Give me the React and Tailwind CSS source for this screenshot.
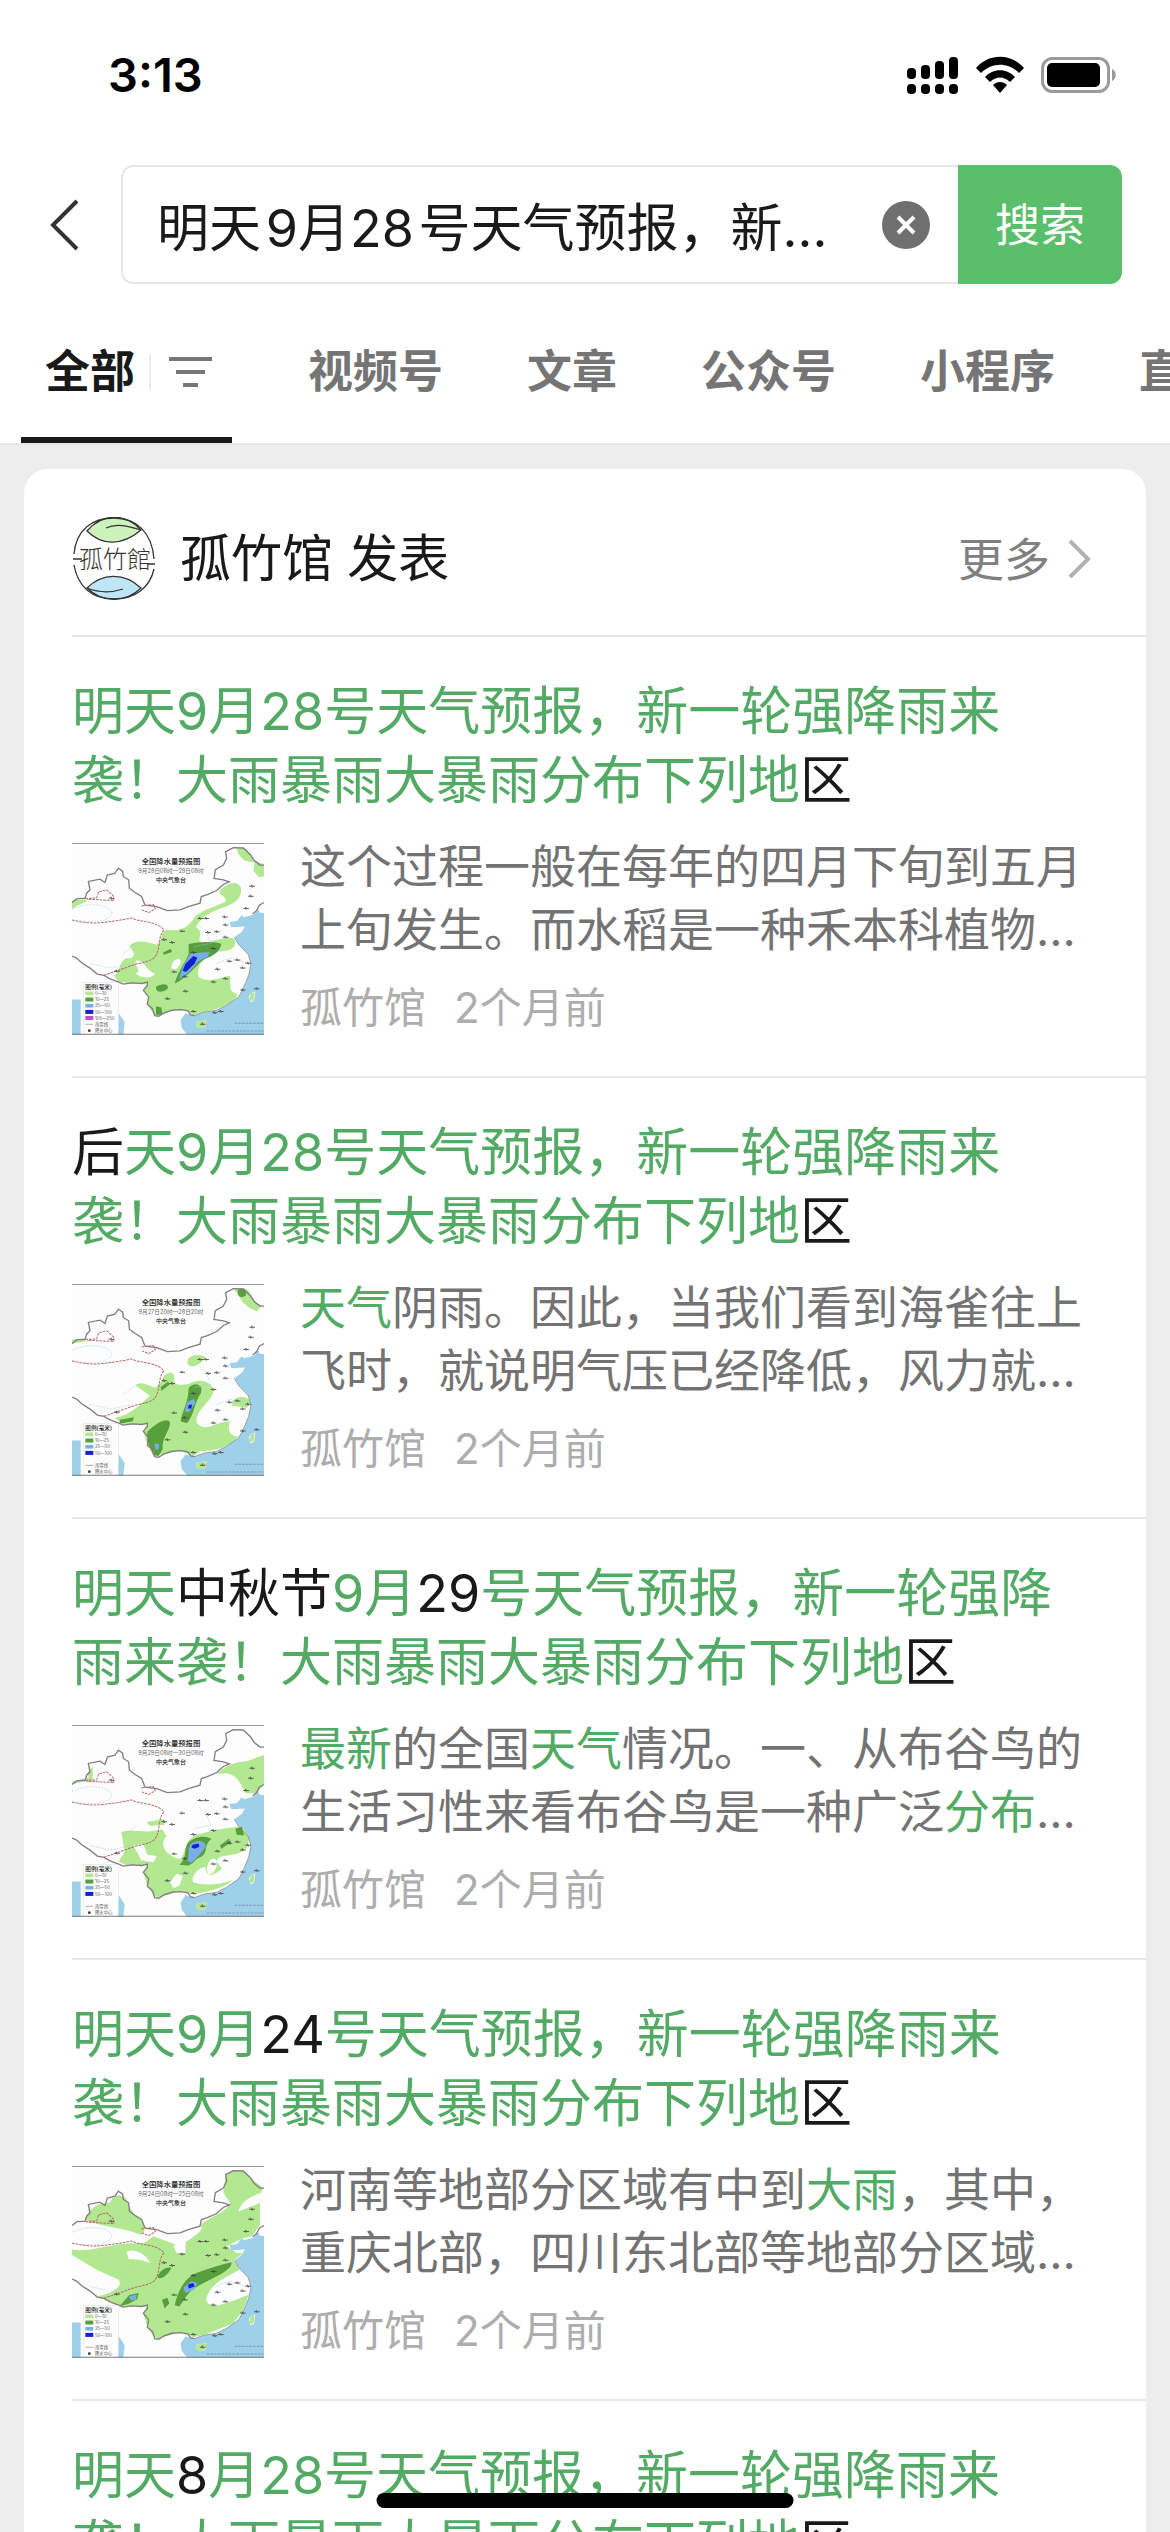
import { useState } from "react";

const HEADLINE_END = "新一轮强降雨来袭！大雨暴雨大暴雨分布下列地*区";

// Rain areas per map, drawn on the shared 576x574 canvas
const rainMaps = {
  a: {
    date: "9月28日08时—29日08时",
    light: [
      "M36 212L75 208L80 214L50 228L36 238Z",
      "M530 54L556 56L574 80L584 92L612 104V140L596 142L580 122L584 98L552 92L534 72Z",
      "M478 184C500 160 530 150 542 172C550 205 520 222 492 232C455 244 420 262 408 292C440 312 400 330 430 338C470 332 522 310 526 334C528 358 500 366 470 364C430 372 408 410 416 440C440 462 490 440 510 436C514 462 500 484 534 492C520 520 470 540 430 545L400 555L380 540L335 540L296 558L280 552L262 520L265 500L250 480L262 460L215 460L175 455L162 436C186 426 170 400 200 384C224 388 230 370 208 350C220 326 260 334 290 344C316 322 296 306 320 300C360 304 380 296 400 268C416 240 470 232 498 214C500 200 480 198 478 184Z",
    ],
    gaps: ["M228 392C250 386 256 420 284 430C280 448 240 444 228 430C248 420 220 410 228 392Z", "M334 410C336 388 362 380 362 394C358 420 334 424 334 410Z"],
    mid: [
      "M386 342C420 334 470 334 484 342C480 366 456 380 436 386C410 400 380 446 344 460C352 430 372 404 386 372Z",
      "M288 470C306 458 326 460 324 474C310 488 286 490 288 470Z",
      "M288 528L304 532L308 552L288 554Z",
      "M308 368L332 356L336 366L312 374Z",
    ],
    blue: ["M392 370L448 366L444 380L414 394C400 412 376 440 358 446C362 420 376 392 392 370Z"],
    heavy: ["M400 378L412 382L404 400L378 426L368 422L376 402Z"],
  },
  b: {
    date: "9月27日20时—28日20时",
    light: [
      "M36 206L76 204L76 212L36 218Z",
      "M524 58C548 44 572 56 574 78L592 100L606 104L590 122L566 110L550 96Z",
      "M384 264C394 248 428 250 436 258C430 276 390 300 382 276Z",
      "M306 330C310 306 340 296 342 316C346 330 330 346 384 340C420 316 462 334 460 364C446 400 404 420 410 454C436 490 478 446 510 452C500 476 512 500 536 494C510 530 460 540 420 540L400 555L360 538L310 550L280 552L262 520L250 480L262 460L190 460L164 440C200 436 232 410 270 374L228 344C240 326 270 346 286 350Z",
      "M518 388C530 376 556 372 572 390L562 410L516 404Z",
    ],
    gaps: [],
    mid: [
      "M386 352C400 330 434 338 422 368C404 390 400 440 380 456L362 450C366 420 384 400 386 352Z",
      "M262 482C280 462 322 434 330 454C330 480 304 500 308 534L296 554L280 552L262 510Z",
      "M180 446L222 438L218 450L178 458Z",
      "M534 58C548 50 560 60 558 74C546 84 530 80 534 58Z",
      "M302 348L324 332L330 340L304 360Z",
    ],
    blue: ["M382 392L402 384L406 396L386 424L374 420Z", "M284 516L298 520L294 536L286 534Z"],
    heavy: ["M386 402L396 400L394 412L384 412Z"],
  },
  c: {
    date: "9月29日08时—30日08时",
    light: [
      "M84 180L98 164L98 206L36 216L36 210L86 198Z",
      "M470 186C490 166 520 150 560 148L612 130V215L590 244L556 244C546 226 536 190 500 184Z",
      "M184 360C220 350 260 366 306 352L320 372C290 400 330 440 362 440C380 420 374 372 420 366C470 350 520 344 550 346L568 380L560 408C530 440 480 420 470 448L486 470C460 490 440 500 436 466C420 460 390 494 400 510C430 520 480 520 520 502C490 530 440 540 400 545L360 536L296 556L280 550L262 520L250 480L262 458L200 460L176 448L194 420Z",
      "M260 330L310 322L314 338L270 342Z",
    ],
    gaps: ["M220 400L250 396L262 428L290 432L280 450L244 444Z", "M330 510L350 484L368 492L358 520L340 528Z", "M440 470C446 440 462 430 470 448C474 470 456 490 444 486Z"],
    mid: ["M384 392C410 368 440 372 454 380C430 400 446 420 424 434C404 440 402 456 384 460L358 458C384 436 370 410 384 392Z", "M526 350L546 344L552 370L530 368Z", "M480 400L506 380L514 390L484 410Z"],
    blue: ["M392 396C410 380 436 386 438 404C424 420 410 440 394 452L380 444C392 430 380 410 392 396Z"],
    heavy: ["M398 398L416 394L418 404L404 410L394 406Z"],
  },
  d: {
    date: "9月24日08时—25日08时",
    light: [
      "M76 200C90 160 120 148 150 150C160 118 204 120 206 160L226 186C256 200 260 240 244 246C200 230 160 224 120 216Z",
      "M497 64L520 52L550 54L574 78L608 104L604 120C570 130 540 150 536 176L600 150V215L576 250L548 256L500 280L530 300L550 300L520 322L540 350C500 370 450 390 438 440C450 480 520 440 566 426L550 470L520 510L440 542L400 552L360 536L296 556L280 550L262 520L250 480L262 458L190 460L110 430C160 420 190 400 176 380L110 350L36 306V290C100 300 160 264 250 272L280 250L360 280C400 250 440 230 420 218C450 190 500 180 510 150L490 120Z",
    ],
    gaps: ["M200 296C230 284 262 310 270 330L240 320L206 318Z", "M340 280L378 250L376 300L350 300Z"],
    mid: [
      "M344 456C352 420 370 380 400 364C440 348 500 330 514 328C520 344 480 366 450 380C410 400 390 410 372 440L358 460Z",
      "M292 372C300 350 320 340 334 344C326 364 300 384 292 372Z",
      "M178 460L208 426L236 420L232 438L206 452Z",
      "M306 440L322 434L328 450L314 466Z",
    ],
    blue: ["M370 404L394 384L412 390L402 410L376 420Z", "M206 430L230 424L228 440L214 442Z"],
    heavy: ["M384 394L400 390L404 400L386 406Z"],
  },
};

const articles = [
  {
    title: "*明天9月28号天气预报，" + HEADLINE_END,
    text: "这个过程一般在每年的四月下旬到五月上旬发生。而水稻是一种禾本科植物…",
    map: "a",
  },
  {
    title: "后*天9月28号天气预报，" + HEADLINE_END,
    text: "*天气*阴雨。因此，当我们看到海雀往上飞时，就说明气压已经降低，风力就…",
    map: "b",
  },
  {
    title: "*明天*中秋节*9月*29*号天气预报，" + HEADLINE_END,
    text: "*最新*的全国*天气*情况。一、从布谷鸟的生活习性来看布谷鸟是一种广泛*分布*…",
    map: "c",
  },
  {
    title: "*明天9月*24*号天气预报，" + HEADLINE_END,
    text: "河南等地部分区域有中到*大雨*，其中，重庆北部，四川东北部等地部分区域…",
    map: "d",
  },
  {
    title: "*明天*8*月28号天气预报，" + HEADLINE_END,
  },
];

const tabs = ["视频号", "文章", "公众号", "小程序", "直播"];

const cities = [
  [568, 168], [564, 198], [550, 234], [486, 260], [488, 284], [412, 264], [430, 264],
  [358, 302], [436, 306], [462, 304], [488, 320], [304, 328], [328, 336], [392, 366],
  [452, 354], [334, 424], [500, 392], [524, 388], [556, 398], [540, 412], [464, 416],
  [488, 444], [452, 454], [366, 438], [368, 482], [314, 504], [392, 542], [456, 546],
  [474, 542], [540, 478], [420, 580], [146, 204], [162, 422], [582, 474],
];

// Text between two asterisks is a search hit
function Highlight({ text }) {
  return text.split("*").map((part, i) =>
    i % 2 ? (
      <em key={i} className="not-italic text-[#52aa65]">
        {part}
      </em>
    ) : (
      part
    )
  );
}

function StatusBar() {
  return (
    <div className="flex h-[165px] items-center justify-between pb-4 pl-[108px] pr-[53px]">
      <span className="text-[47px] font-semibold leading-none text-black">3:13</span>
      <div className="flex items-center gap-4">
        <svg width="52" height="38" viewBox="0 0 52 38">
          <rect x="0" y="12" width="9" height="11" rx="4" />
          <rect x="14" y="9" width="9" height="14" rx="4" />
          <rect x="28" y="5" width="9" height="18" rx="4" />
          <rect x="42" y="1" width="9" height="22" rx="4" />
          <rect x="0" y="28" width="9" height="10" rx="4" />
          <rect x="14" y="28" width="9" height="10" rx="4" />
          <rect x="28" y="28" width="9" height="10" rx="4" />
          <rect x="42" y="28" width="9" height="10" rx="4" />
        </svg>
        <svg width="50" height="38" viewBox="0 0 50 38">
          <path d="M1 12C14 -3 36 -3 49 12L44 17C33 6 17 6 6 17Z" />
          <path d="M10 21C18 12 32 12 40 21L35 26C29 20 21 20 15 26Z" />
          <path d="M18 29C22 25 28 25 32 29L25 37Z" />
        </svg>
        <svg width="76" height="38" viewBox="0 0 76 38">
          <rect x="1.5" y="2.5" width="66" height="33" rx="10" fill="none" stroke="#9b9b9b" strokeWidth="3" />
          <rect x="6" y="7" width="53" height="24" rx="5" />
          <path d="M71 13C76 15 76 23 71 25Z" fill="#9b9b9b" />
        </svg>
      </div>
    </div>
  );
}

function SearchBar() {
  const [query, setQuery] = useState("明天\u200a9月28\u200a号天气预报，新一轮强降雨来袭");

  return (
    <form className="flex items-center pl-[46px] pr-12" onSubmit={(e) => e.preventDefault()}>
      <button type="button" aria-label="返回" className="w-[75px] shrink-0">
        <svg width="36" height="56" viewBox="0 0 36 56" fill="none" stroke="#333" strokeWidth="4">
          <path d="M31 4L7 28L31 52" />
        </svg>
      </button>
      <div className="flex h-[119px] min-w-0 flex-1 overflow-hidden rounded-xl">
        <div className="flex min-w-0 flex-1 items-center rounded-l-xl border-2 border-r-0 border-[#e6e6e6] pl-[34px] pr-7">
          <input
            type="text"
            aria-label="搜索内容"
            value={query}
            onChange={(e) => setQuery(e.target.value)}
            className="min-w-0 flex-1 text-ellipsis bg-transparent pt-2 text-[52px] text-[#1a1a1a] outline-none"
          />
          <button type="button" aria-label="清除" className="ml-9 shrink-0" onClick={() => setQuery("")}>
            <svg width="48" height="48" viewBox="0 0 48 48">
              <circle cx="24" cy="24" r="24" fill="#6f6f6f" />
              <path d="M16 16L32 32M32 16L16 32" stroke="#fff" strokeWidth="4" />
            </svg>
          </button>
        </div>
        <button type="submit" className="w-[164px] shrink-0 bg-[#5abf6b] pt-0.5 text-[45px] text-white">
          搜索
        </button>
      </div>
    </form>
  );
}

function Tabs() {
  return (
    <nav className="flex h-[159px] gap-[84px] overflow-hidden whitespace-nowrap pl-[21px] text-[45px] font-semibold text-[#757575]">
      <button className="-mr-2 flex shrink-0 items-center border-b-6 border-[#191919] pl-6 pr-5 pt-[22px]">
        <span className="text-[#191919]">全部</span>
        <span className="ml-[14px] h-9 w-[2px] bg-[#ececec]" />
        <svg className="ml-[18px]" width="43" height="32" viewBox="0 0 43 32" stroke="#777" strokeWidth="4">
          <path d="M0 3H43M7 16H36M14 29H29" />
        </svg>
      </button>
      {tabs.map((tab) => (
        <button key={tab} className="shrink-0 pt-4">
          {tab}
        </button>
      ))}
    </nav>
  );
}

function Avatar() {
  return (
    <svg width="84" height="84" viewBox="0 0 84 84" fill="none" stroke="#333" strokeWidth="1.3">
      <path d="M15 14C30 -4 54 -4 69 13C50 29 30 29 15 14Z" fill="#cdf3bd" />
      <path d="M34 11C44 6 56 9 69 13" />
      <path d="M15 71C30 56 52 55 69 71C54 86 30 86 15 71Z" fill="#bfe6f6" />
      <path d="M15 71C30 77 42 75 51 72" />
      <path d="M1 42H10M2 37C4 13 20 1 42 1C64 1 80 15 82 42M75 47H83M2 48C6 70 20 82 42 82C64 82 78 70 82 52" />
      <text x="43" y="51" fontSize="24" fontWeight="300" textAnchor="middle" fill="#333" stroke="none">
        孤竹館
      </text>
    </svg>
  );
}

// 24-hour rainfall forecast map
function RainMap({ rain }) {
  const { date, light, gaps, mid, blue, heavy } = rain;

  return (
    <svg className="mt-2 shrink-0" width="192" height="192" viewBox="36 40 576 574" preserveAspectRatio="none">
      <rect x="36" y="40" width="576" height="574" fill="#fdfdfd" />
      <path
        fill="#9fd0ea"
        d="M612 250L598 248L596 238L582 254L552 262L545 256L530 274L508 276L514 292L555 290L545 306L523 322L535 342L565 374L573 402L566 436L550 474L536 500L500 525L470 540L430 546L404 556L376 550L362 570L365 592L382 614H612ZM36 508H62V614H36ZM176 548L194 576L190 614H174Z"
      />
      <path fill="#fdfdfd" d="M574 488L586 484L582 512L572 516L566 500ZM410 574L440 570L436 590L420 594L408 588Z" />
      <path fill="#b2e88f" d="M574 488L584 486L580 512L566 510ZM410 574L440 570L434 590L420 594L408 588Z" />
      {light.map((d) => <path key={d} d={d} fill="#b2e88f" />)}
      {gaps.map((d) => <path key={d} d={d} fill="#fdfdfd" />)}
      {mid.map((d) => <path key={d} d={d} fill="#579f3d" />)}
      {blue.map((d) => <path key={d} d={d} fill="#78aee8" />)}
      {heavy.map((d) => <path key={d} d={d} fill="#1620d0" />)}

      {/* National border and coast */}
      <g fill="none" stroke="#857c84" strokeWidth="4">
        <path d="M36 218L50 207L75 205L80 190L90 180L85 155L120 148L135 158L142 136L165 130L175 115L188 124L190 140L206 150L208 175L225 188L245 200L255 226L290 230L322 242L360 240L385 230L420 220L424 200L442 194L470 182L490 164L508 156L490 150L462 146L466 120L490 106L500 86L497 66L520 54L550 55L572 76L582 92L600 106H612M612 218L598 226L590 242L578 252" />
        <path d="M36 378L50 384L65 398L90 414L112 432L132 436L150 446L176 456L190 462L215 458L246 460L262 456L262 466L250 480L266 500L262 522L278 536L284 556L296 558L312 548L336 540L362 538L384 542L392 554L404 556" />
        <path strokeWidth="2" d="M404 556L430 546L470 540L500 525L536 500L550 474L566 436L573 402L565 374L535 342L523 322" />
      </g>
      {/* River basins */}
      <g fill="none" stroke="#b9686c" strokeWidth="3" strokeDasharray="8 3">
        <path d="M36 270C70 278 100 282 140 276C170 272 190 270 215 264C240 278 290 272 312 300C290 320 306 370 276 388C250 400 226 400 200 412L130 436" />
        <path d="M76 206L110 204L116 186L140 180L160 198L162 212L80 208M244 228L280 224L286 236L266 248L246 240" />
      </g>
      <path fill="none" stroke="#a9c9e2" strokeWidth="2" strokeDasharray="5 4" d="M36 238C80 216 150 222 156 250C150 276 90 280 60 272M418 286L440 310L452 340L400 350M470 400L510 384L560 400M190 370L230 340M90 400L150 414L220 400" />
      <g fill="#444" fillOpacity="0.8">
        {cities.map(([x, y]) => (
          <path key={`${x}-${y}`} d={`M${x} ${y}h5v-3h4v3h8v3h-6v2h-4v-2h-7z`} />
        ))}
      </g>

      {/* Heading */}
      <g textAnchor="middle" fill="#222">
        <text x="333" y="103" fontSize="22" fontWeight="500">全国降水量预报图</text>
        <text x="333" y="130" fontSize="17" fill="#666">{date}</text>
        <text x="333" y="156" fontSize="18" fontWeight="500">中央气象台</text>
      </g>

      {/* Legend */}
      <rect x="70" y="458" width="105" height="156" fill="#fdfdfd" stroke="#d0d0d0" />
      <path fill="#b2e88f" d="M76 484h24v11h-24z" />
      <path fill="#579f3d" d="M76 502h24v12h-24z" />
      <path fill="#78aee8" d="M76 521h24v11h-24z" />
      <path fill="#1620d0" d="M76 539h24v12h-24z" />
      {rain === rainMaps.a && <path fill="#c04fce" d="M76 557h24v12h-24z" />}
      <path stroke="#888" strokeWidth="2" d="M76 582h24" />
      <circle cx="88" cy="601" r="4" fill="#333" />
      <g fill="#555" fontSize="13">
        <text x="76" y="476" fontSize="17" fontWeight="500" fill="#222">图例(毫米)</text>
        <text x="105" y="494">0—10</text>
        <text x="105" y="513">10—25</text>
        <text x="105" y="531">25—50</text>
        <text x="105" y="550">50—100</text>
        {rain === rainMaps.a && <text x="105" y="568">100—250</text>}
        <text x="105" y="587">雨雪线</text>
        <text x="105" y="606">降水中心</text>
      </g>
      <path stroke="#7b98ab" strokeWidth="3" strokeDasharray="8 3" d="M524 579H610M440 602H610" />
      <path stroke="#7a7a7a" strokeWidth="3" d="M36 41H612M36 612H612" />
    </svg>
  );
}

function Article({ title, text, map }) {
  return (
    <article className="border-b-2 border-[#e8e8e8] pb-[41px] pr-14 pt-10">
      <h2 className="mb-5 text-[52px] leading-[69px] text-[#191919]">
        <Highlight text={title} />
      </h2>
      {text && (
        <div className="flex gap-9">
          <RainMap rain={rainMaps[map]} />
          <div className="min-w-0 flex-1">
            <p className="text-[46px] leading-[63px] text-[#737373]">
              <Highlight text={text} />
            </p>
            <p className="mt-5 flex gap-7 text-[42px] leading-[54px] text-[#adadad]">
              <span>孤竹馆</span>
              <span>2个月前</span>
            </p>
          </div>
        </div>
      )}
    </article>
  );
}

export default function App() {
  return (
    <div className="flex h-screen flex-col overflow-hidden bg-[#ededed] font-['Inter','Noto_Sans_CJK_SC',sans-serif]">
      <header className="shrink-0 border-b-2 border-[#e6e6e6] bg-white">
        <StatusBar />
        <SearchBar />
        <Tabs />
      </header>

      <main className="min-h-0 flex-1 overflow-hidden px-6 pt-6">
        <section className="rounded-t-3xl bg-white pl-12">
          <div className="flex h-[168px] items-center border-b-2 border-[#e8e8e8] pr-[54px] pt-[14px]">
            <Avatar />
            <h1 className="ml-6 text-[51px] text-[#191919]">孤竹馆 发表</h1>
            <a href="#more" className="ml-auto flex items-center gap-4 text-[46px] text-[#808080]">
              更多
              <svg width="26" height="42" viewBox="0 0 26 42" fill="none" stroke="#b2b2b2" strokeWidth="4">
                <path d="M4 3L22 21L4 39" />
              </svg>
            </a>
          </div>
          {articles.map((article) => (
            <Article key={article.title} {...article} />
          ))}
        </section>
      </main>

      {/* Home indicator */}
      <div className="fixed bottom-6 left-1/2 h-[15px] w-[417px] -translate-x-1/2 rounded-full bg-black" />
    </div>
  );
}
